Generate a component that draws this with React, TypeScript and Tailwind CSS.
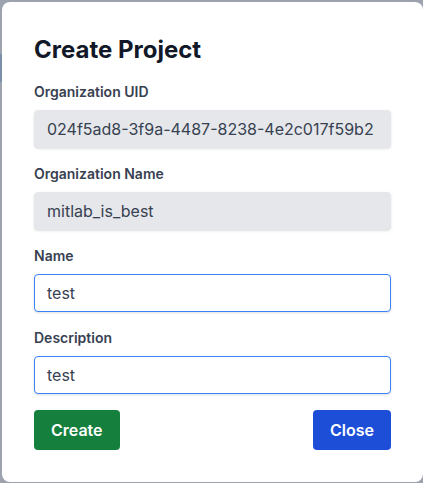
import { useState } from "react";

type FieldProps = {
  label: string;
  value: string;
  disabled?: boolean;
  onChange?: (value: string) => void;
};

function Field({ label, value, disabled, onChange }: FieldProps) {
  return (
    <label className="flex flex-col">
      <span className="mb-2 h-5 text-sm font-semibold leading-5 text-[#374151]">{label}</span>
      <input
        value={value}
        disabled={disabled}
        onChange={(event) => onChange?.(event.target.value)}
        className={`h-[38px] w-full rounded-[4px] px-3 text-base text-[#374151] outline-none ${
          disabled
            ? "border border-[#e5e7eb] bg-[#e5e7eb] shadow-sm"
            : "border border-[#3b82f6] bg-white shadow-sm"
        }`}
      />
    </label>
  );
}

export default function App() {
  const [name, setName] = useState("test");
  const [description, setDescription] = useState("test");

  return (
    <div
      className="relative h-[483px] w-[423px] overflow-hidden bg-[#9ca3af]"
      style={{ fontFamily: "Inter, 'Noto Sans', sans-serif" }}
    >
      <div className="absolute left-0 top-[54px] h-7 w-[2px] bg-[#7b8fa8]" />
      <div className="absolute left-[2px] top-[2px] w-[421px] rounded-lg bg-white p-8">
        <h2 className="mb-4 text-2xl font-bold leading-8 text-[#111827]">Create Project</h2>
        <div className="flex flex-col gap-4">
          <Field label="Organization UID" value="024f5ad8-3f9a-4487-8238-4e2c017f59b2" disabled />
          <Field label="Organization Name" value="mitlab_is_best" disabled />
          <Field label="Name" value={name} onChange={setName} />
          <Field label="Description" value={description} onChange={setDescription} />
        </div>
        <div className="mt-4 flex items-center justify-between">
          <button
            type="button"
            className="h-10 rounded-[4px] bg-[#15803d] px-[17px] text-base font-semibold text-white"
          >
            Create
          </button>
          <button
            type="button"
            className="h-10 rounded-[4px] bg-[#1d4ed8] px-[17px] text-base font-semibold text-white"
          >
            Close
          </button>
        </div>
      </div>
    </div>
  );
}
